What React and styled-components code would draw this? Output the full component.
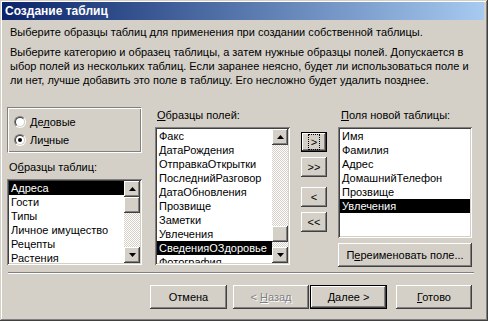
import React from 'react';
import styled, { createGlobalStyle, css } from 'styled-components';

const Global = createGlobalStyle`
  html, body { margin: 0; padding: 0; background: #d4d0c8; }
  body { font-family: "Liberation Sans", Arial, sans-serif; font-size: 11px; color: #000; }
  * { box-sizing: border-box; }
`;

const raised = css`
  box-shadow: inset -1px -1px #404040, inset 1px 1px #fff, inset -2px -2px #808080, inset 2px 2px #d4d0c8;
`;
const sunken = css`
  box-shadow: inset 1px 1px #808080, inset -1px -1px #fff, inset 2px 2px #404040, inset -2px -2px #d4d0c8;
`;

const Window = styled.div`
  width: 488px;
  height: 321px;
  background: #d4d0c8;
  padding: 2px 4px 3px 2px;
  box-shadow: inset -1px -1px #404040, inset 1px 1px #d4d0c8, inset -2px -2px #808080, inset 2px 2px #fff;
  display: flex;
  flex-direction: column;
  overflow: hidden;
`;

const TitleBar = styled.div`
  height: 18px;
  flex: none;
  background: linear-gradient(to right, #0a246a, #a6caf0);
  color: #fff;
  font-weight: bold;
  font-size: 12px;
  line-height: 18px;
  padding-left: 3px;
  white-space: nowrap;
`;

const Intro = styled.div`
  margin-top: 5px;
  padding-left: 8px;
  line-height: 14px;
  white-space: nowrap;
`;

const Paragraph = styled.div`
  margin-top: 6px;
  padding-left: 8px;
  line-height: 14px;
  white-space: nowrap;
`;

const Main = styled.div`
  margin-top: 20px;
  margin-left: 5px;
  display: flex;
  align-items: flex-start;
`;

const Column = styled.div`
  width: ${(p) => p.$w}px;
  margin-left: ${(p) => p.$ml || 0}px;
  padding-top: ${(p) => p.$pt || 0}px;
  display: flex;
  flex-direction: column;
`;

const GroupBox = styled.div`
  height: 46px;
  border: 1px solid #808080;
  border-right-color: #fff;
  border-bottom-color: #fff;
  box-shadow: inset 1px 1px #fff, inset -1px -1px #808080;
  padding: 7px 0 0 6px;
  display: flex;
  flex-direction: column;
  gap: 4px;
`;

const RadioRow = styled.label`
  display: flex;
  align-items: center;
  height: 14px;
  line-height: 14px;
  gap: 4px;
`;

const RadioOuter = styled.span`
  width: 12px;
  height: 12px;
  border-radius: 50%;
  border: 1px solid;
  border-color: #808080 #fff #fff #808080;
  display: flex;
  flex: none;
`;

const RadioInner = styled.span`
  flex: 1;
  border-radius: 50%;
  border: 1px solid;
  border-color: #404040 #d4d0c8 #d4d0c8 #404040;
  background: #fff;
  display: flex;
  align-items: center;
  justify-content: center;
`;

const RadioDot = styled.span`
  width: 4px;
  height: 4px;
  border-radius: 50%;
  background: #000;
`;

const Label = styled.div`
  line-height: 14px;
  padding-left: ${(p) => p.$pl ?? 2}px;
  margin-top: ${(p) => p.$mt || 0}px;
  white-space: nowrap;
`;

const ListBox = styled.div`
  margin-top: 5px;
  height: ${(p) => p.$h}px;
  background: #fff;
  padding: 2px;
  ${sunken};
  display: flex;
  overflow: hidden;
`;

const ListItems = styled.div`
  flex: 1;
  min-width: 0;
  overflow: hidden;
`;

const Item = styled.div`
  height: 14px;
  line-height: 14px;
  padding-left: 2px;
  white-space: nowrap;
  overflow: hidden;
  background: ${(p) => (p.$sel ? '#000' : 'transparent')};
  color: ${(p) => (p.$sel ? '#fff' : '#000')};
`;

const ScrollBar = styled.div`
  width: 16px;
  flex: none;
  display: flex;
  flex-direction: column;
`;

const ArrowBtn = styled.div`
  width: 16px;
  height: 16px;
  flex: none;
  background: #d4d0c8;
  ${raised};
  display: flex;
  align-items: center;
  justify-content: center;
`;

const Track = styled.div`
  flex: 1;
  background: repeating-conic-gradient(#d4d0c8 0 25%, #fff 0 50%) 0 0 / 2px 2px;
`;

const Thumb = styled.div`
  width: 16px;
  height: 16px;
  margin-top: ${(p) => p.$offset}px;
  background: #d4d0c8;
  ${raised};
`;

const Button = styled.button`
  font-family: "Liberation Sans", Arial, sans-serif;
  font-size: 11px;
  color: ${(p) => (p.disabled ? '#808080' : '#000')};
  text-shadow: ${(p) => (p.disabled ? '1px 1px #fff' : 'none')};
  width: ${(p) => (p.$w ? `${p.$w}px` : '100%')};
  height: ${(p) => p.$h || 24}px;
  margin: ${(p) => p.$m || '0'};
  padding: 0;
  background: #d4d0c8;
  border: ${(p) => (p.$default ? '1px solid #000' : 'none')};
  ${raised};
  display: flex;
  align-items: center;
  justify-content: center;
  white-space: pre;
  flex: none;
`;

const Caption = styled.span`
  white-space: pre;
`;

const FocusRing = styled.span`
  outline: 1px dotted #000;
  padding: 1px 2px;
  line-height: 12px;
`;

const MoveButtons = styled.div`
  display: flex;
  flex-direction: column;
`;

const Separator = styled.div`
  margin: 5px 10px 0 6px;
  height: 2px;
  border-top: 1px solid #808080;
  border-bottom: 1px solid #fff;
`;

const BottomRow = styled.div`
  margin-top: 11px;
  padding-right: 12px;
  display: flex;
  justify-content: flex-end;
`;

const Up = () => (
  <svg width="7" height="4" viewBox="0 0 7 4"><polygon points="3.5,0 7,4 0,4" fill="#000" /></svg>
);
const Down = () => (
  <svg width="7" height="4" viewBox="0 0 7 4"><polygon points="0,0 7,0 3.5,4" fill="#000" /></svg>
);

const Scroll = ({ offset }) => (
  <ScrollBar>
    <ArrowBtn><Up /></ArrowBtn>
    <Track><Thumb $offset={offset} /></Track>
    <ArrowBtn><Down /></ArrowBtn>
  </ScrollBar>
);

const Radio = ({ checked, children }) => (
  <RadioRow>
    <RadioOuter><RadioInner>{checked && <RadioDot />}</RadioInner></RadioOuter>
    <span>{children}</span>
  </RadioRow>
);

const tables = ['Адреса', 'Гости', 'Типы', 'Личное имущество', 'Рецепты', 'Растения'];
const fields = ['Факс', 'ДатаРождения', 'ОтправкаОткрытки', 'ПоследнийРазговор', 'ДатаОбновления', 'Прозвище', 'Заметки', 'Увлечения', 'СведенияОЗдоровье', 'Фотография'];
const newFields = ['Имя', 'Фамилия', 'Адрес', 'ДомашнийТелефон', 'Прозвище', 'Увлечения'];

export default function App() {
  return (
    <>
      <Global />
      <Window>
        <TitleBar>Создание таблиц</TitleBar>
        <Intro>Выберите образцы таблиц для применения при создании собственной таблицы.</Intro>
        <Paragraph>
          <div>Выберите категорию и образец таблицы, а затем нужные образцы полей. Допускается в</div>
          <div>ыбор полей из нескольких таблиц. Если заранее неясно, будет ли использоваться поле и</div>
          <div>ли нет, лучше добавить это поле в таблицу. Его несложно будет удалить позднее.</div>
        </Paragraph>
        <Main>
          <Column $w={135}>
            <GroupBox>
              <Radio>Де<u>л</u>овые</Radio>
              <Radio checked>Ли<u>ч</u>ные</Radio>
            </GroupBox>
            <Label $mt={7}>О<u>б</u>разцы таблиц:</Label>
            <ListBox $h={86}>
              <ListItems>
                {tables.map((t, i) => <Item key={t} $sel={i === 0}>{t}</Item>)}
              </ListItems>
              <Scroll offset={0} />
            </ListBox>
          </Column>
          <Column $w={135} $ml={13} $pt={1}>
            <Label><u>О</u>бразцы полей:</Label>
            <ListBox $h={138}>
              <ListItems>
                {fields.map((t, i) => <Item key={t} $sel={i === 8}>{t}</Item>)}
              </ListItems>
              <Scroll offset={81} />
            </ListBox>
          </Column>
          <Column $w={26} $ml={11} $pt={25}>
            <MoveButtons>
              <Button $w={26} $h={20} $default><FocusRing>&gt;</FocusRing></Button>
              <Button $w={26} $h={20} $m="5px 0 0">&gt;&gt;</Button>
              <Button $w={26} $h={20} $m="10px 0 0">&lt;</Button>
              <Button $w={26} $h={20} $m="5px 0 0">&lt;&lt;</Button>
            </MoveButtons>
          </Column>
          <Column $w={134} $ml={11} $pt={1}>
            <Label $pl={3}><u>П</u>оля новой таблицы:</Label>
            <ListBox $h={111}>
              <ListItems>
                {newFields.map((t, i) => <Item key={t} $sel={i === 5}>{t}</Item>)}
              </ListItems>
            </ListBox>
            <Button $m="5px 0 0"><Caption>П<u>е</u>реименовать поле...</Caption></Button>
          </Column>
        </Main>
        <Separator />
        <BottomRow>
          <Button $w={77} $m="0 6px 0 0"><Caption>Отмена</Caption></Button>
          <Button $w={76} disabled><Caption>&lt; <u>Н</u>азад</Caption></Button>
          <Button $w={77} $m="0 0 0 1px" $default><Caption><u>Д</u>алее &gt;</Caption></Button>
          <Button $w={76} $m="0 0 0 9px"><Caption><u>Г</u>отово</Caption></Button>
        </BottomRow>
      </Window>
    </>
  );
}
